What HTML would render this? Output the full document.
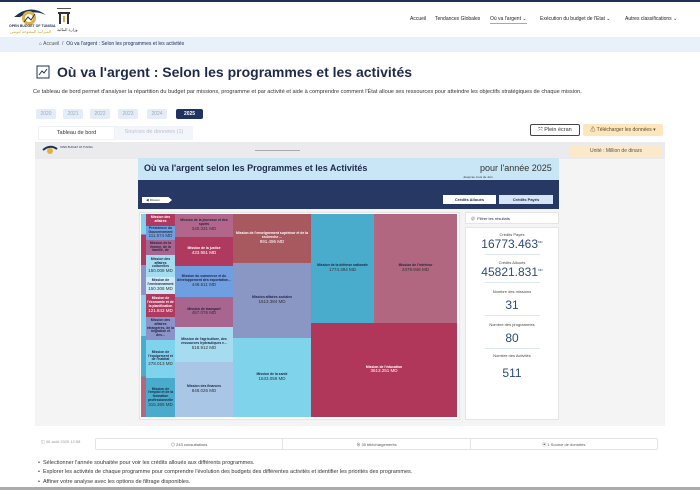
<!DOCTYPE html>
<html><head><meta charset="utf-8"><style>
*{margin:0;padding:0;box-sizing:border-box}
body{width:700px;height:490px;overflow:hidden;background:#fff;font-family:"Liberation Sans","Noto Sans CJK SC",sans-serif;color:#1e2a4a;position:relative}
.a{position:absolute}
.t{position:absolute;display:flex;flex-direction:column;align-items:center;justify-content:center;text-align:center;font-size:3.4px;font-weight:bold;color:#1d2340;line-height:1.1;overflow:hidden;padding:1px}
.t span{font-weight:normal;font-size:4.5px;color:#333;line-height:1.1}
.nav{font-size:5px;color:#222}
.yr{position:absolute;top:109px;height:10px;width:20px;background:#e4ecf7;color:#9aabc4;font-size:5px;text-align:center;line-height:10px;border-radius:2px}
.k{font-size:4px;color:#444;text-align:center}
.v{font-size:12px;color:#2d4a7a;text-align:center}
</style></head><body>
<div class="a" style="left:0;top:0;width:700px;height:2px;background:#1f2f55"></div>
<svg class="a" style="left:10px;top:3px" width="40" height="32" viewBox="0 0 40 32"><path d="M4 14 Q20 0 36 12 Q22 6 10 14Z" fill="#1f2f55"/><circle cx="19" cy="15" r="7" fill="#e2b13c"/><circle cx="19" cy="15" r="4" fill="#fff"/><path d="M14 19 L18 14 L21 17 L25 11" stroke="#1f2f55" stroke-width="1" fill="none"/></svg>
<div class="a" style="left:9px;top:24px;font-size:3.5px;font-weight:bold;color:#1f2f55">OPEN BUDGET OF TUNISIA</div>
<div class="a" style="left:10px;top:29px;font-size:4px;color:#d4a93a">الميزانية المفتوحة لتونس</div>
<svg class="a" style="left:55px;top:5px" width="18" height="28" viewBox="0 0 18 28"><rect x="3" y="7" width="12" height="2" fill="#333"/><rect x="4" y="9" width="2" height="10" fill="#333"/><rect x="12" y="9" width="2" height="10" fill="#333"/><rect x="8" y="11" width="2" height="6" fill="#d4a93a"/><rect x="2" y="3" width="14" height="1" fill="#555"/></svg>
<div class="a" style="left:57px;top:27px;font-size:4px;color:#333">وزارة المالية</div>
<div class="a nav" style="left:410px;top:16px">Accueil</div>
<div class="a nav" style="left:435px;top:16px">Tendances Globales</div>
<div class="a nav" style="left:490px;top:16px;border-bottom:1px solid #d4a93a;padding-bottom:1px">Où va l'argent ⌄</div>
<div class="a nav" style="left:540px;top:16px">Exécution du budget de l'Etat ⌄</div>
<div class="a nav" style="left:625px;top:16px">Autres classifications ⌄</div>
<div class="a" style="left:0;top:37px;width:700px;height:15px;background:#e8f0fa"></div>
<div class="a" style="left:39px;top:41px;font-size:5px;color:#555">⌂ Accueil &nbsp;/&nbsp; <span style="color:#1e2a4a">Où va l'argent : Selon les programmes et les activités</span></div>
<svg class="a" style="left:36px;top:65px" width="14" height="14" viewBox="0 0 14 14"><rect x="1" y="1" width="12" height="12" fill="none" stroke="#1f2f55" stroke-width="1"/><path d="M3 10 L6 6 L8 8 L11 4" stroke="#1f2f55" fill="none" stroke-width="1"/></svg>
<div class="a" style="left:57px;top:64px;font-size:14px;font-weight:bold;color:#1e2a4a">Où va l'argent : Selon les programmes et les activités</div>
<div class="a" style="left:33px;top:89px;font-size:5.6px;color:#333;white-space:nowrap">Ce tableau de bord permet d'analyser la répartition du budget par missions, programme et par activité et aide à comprendre comment l'État alloue ses ressources pour atteindre les objectifs stratégiques de chaque mission.</div>
<div class="yr" style="left:36px">2020</div><div class="yr" style="left:63px">2021</div><div class="yr" style="left:90px">2022</div><div class="yr" style="left:118px">2023</div><div class="yr" style="left:147px">2024</div>
<div class="yr" style="left:176px;width:27px;background:#1f3360;color:#fff;font-weight:bold">2025</div>
<div class="a" style="left:38px;top:126px;width:77px;height:14px;background:#fff;border:1px solid #eef1f5;font-size:5.5px;text-align:center;line-height:13px;color:#333">Tableau de bord</div>
<div class="a" style="left:115px;top:126px;width:78px;height:14px;background:#f2f5fa;font-size:5.5px;text-align:center;line-height:13px;color:#b8c2d2">Sources de données (1)</div>
<div class="a" style="left:530px;top:124px;width:50px;height:12px;border:1px solid #444;border-radius:2px;font-size:5.5px;text-align:center;line-height:10px;color:#333">⤧ Plein écran</div>
<div class="a" style="left:583px;top:124px;width:80px;height:12px;background:#fde6bd;border-radius:2px;font-size:5px;text-align:center;line-height:12px;color:#5a4a20">⚠ Télécharger les données ▾</div>
<div class="a" style="left:35px;top:142px;width:630px;height:284px;background:#f4f4f5"></div>
<div class="a" style="left:35px;top:142px;width:630px;height:17px;background:#ebebed"></div>
<svg class="a" style="left:42px;top:144px" width="16" height="12" viewBox="0 0 16 12"><path d="M1 6 Q8 0 15 5" stroke="#1f2f55" stroke-width="2" fill="none"/><circle cx="8" cy="7" r="3" fill="#e2b13c"/></svg>
<div class="a" style="left:60px;top:146px;font-size:2.5px;color:#1f2f55">OPEN BUDGET OF TUNISIA</div>
<div class="a" style="left:255px;top:150px;width:45px;height:1px;background:#aaa"></div>
<div class="a" style="left:570px;top:145px;width:92px;height:13px;background:#fce9cb;font-size:5px;text-align:center;line-height:13px;color:#555">Unité : Million de dinars</div>
<div class="a" style="left:138px;top:158px;width:421px;height:22px;background:#c8e6f6"></div>
<div class="a" style="left:144px;top:163px;font-size:9px;font-weight:bold;color:#1e2a4a">Où va l'argent selon les Programmes et les Activités</div>
<div class="a" style="left:480px;top:163px;font-size:9px;color:#333">pour l'année 2025</div>
<div class="a" style="left:463px;top:175px;font-size:3px;color:#333">Jusqu'au mois de Juin</div>
<div class="a" style="left:138px;top:180px;width:421px;height:29px;background:#263863"></div>
<div class="a" style="left:142px;top:197px;width:30px;height:6px;background:#fff;font-size:3px;line-height:6px;padding-left:4px;clip-path:polygon(0 0,88% 0,100% 50%,88% 100%,0 100%)">◀ Mission</div>
<div class="a" style="left:443px;top:195px;width:53px;height:9px;background:#fff;font-size:4px;font-weight:bold;text-align:center;line-height:9px">Crédits Alloués</div>
<div class="a" style="left:499px;top:195px;width:54px;height:9px;background:#d5e4f6;font-size:4px;font-weight:bold;text-align:center;line-height:9px">Crédits Payés</div>
<div class="a" style="left:139px;top:212px;width:321px;height:208px;background:#fff;border:1px solid #e5e5e5"></div>
<div class="a" style="left:141px;top:214px;width:5px;height:203px;background:linear-gradient(#7fd3ec 0 10%,#b0395f 10% 25%,#8b93c8 25% 40%,#7fd3ec 40% 60%,#4aaccd 60% 80%,#b0677f 80%)"></div>
<div class="t" style="left:146px;top:214px;width:29px;height:12px;background:#b0395f;color:#fff">Mission des affaires</div>
<div class="t" style="left:146px;top:226px;width:29px;height:14px;background:#6f9fe0">Présidence du Gouvernement<span>111.574 MD</span></div>
<div class="t" style="left:146px;top:240px;width:29px;height:15px;background:#a8658f">Mission de la femme, de la famille, de</div>
<div class="t" style="left:146px;top:255px;width:29px;height:22px;background:#a6dcf0">Mission des affaires culturelles<span>150.008 MD</span></div>
<div class="t" style="left:146px;top:277px;width:29px;height:17px;background:#cdebf6">Mission de l'environnement<span>150.308 MD</span></div>
<div class="t" style="left:146px;top:294px;width:29px;height:23px;background:#b0395f;color:#fff">Mission de l'économie et de la planification<span style="color:#fff">121.843 MD</span></div>
<div class="t" style="left:146px;top:317px;width:29px;height:23px;background:#8b93c8">Mission des affaires étrangères, de la migration et des...</div>
<div class="t" style="left:146px;top:340px;width:29px;height:38px;background:#7fd3ec">Mission de l'équipement et de l'habitat<span>278.013 MD</span></div>
<div class="t" style="left:146px;top:378px;width:29px;height:39px;background:#4aaccd">Mission de l'emploi et de la formation professionnelle<span>315.365 MD</span></div>
<div class="t" style="left:175px;top:214px;width:58px;height:23px;background:#b2678a">Mission de la jeunesse et des sports<span>340.331 MD</span></div>
<div class="t" style="left:175px;top:237px;width:58px;height:29px;background:#b0395f;color:#fff">Mission de la justice<span style="color:#fff">433.951 MD</span></div>
<div class="t" style="left:175px;top:266px;width:58px;height:31px;background:#6f9fe0">Mission du commerce et du développement des exportation...<span>448.611 MD</span></div>
<div class="t" style="left:175px;top:297px;width:58px;height:30px;background:#a8658f">Mission de transport<span>457.076 MD</span></div>
<div class="t" style="left:175px;top:327px;width:58px;height:35px;background:#a6dcf0">Mission de l'agriculture, des ressources hydrauliques e...<span>518.912 MD</span></div>
<div class="t" style="left:175px;top:362px;width:58px;height:55px;background:#a9c6e6">Mission des finances<span>848.026 MD</span></div>
<div class="t" style="left:233px;top:214px;width:78px;height:49px;background:#a8585f;color:#fff">Mission de l'enseignement supérieur et de la recherche ...<span style="color:#fff">991.496 MD</span></div>
<div class="t" style="left:233px;top:263px;width:78px;height:75px;background:#8a96c4">Mission affaires sociales<span>1513.384 MD</span></div>
<div class="t" style="left:233px;top:338px;width:78px;height:79px;background:#7fd4ec">Mission de la santé<span>1633.059 MD</span></div>
<div class="t" style="left:311px;top:214px;width:63px;height:109px;background:#4aaccd">Mission de la défense nationale<span>1774.394 MD</span></div>
<div class="t" style="left:374px;top:214px;width:83px;height:109px;background:#b0677f">Mission de l'intérieur<span>2379.946 MD</span></div>
<div class="t" style="left:311px;top:323px;width:146px;height:94px;background:#b0365a;color:#fff">Mission de l'éducation<span style="color:#fff">3613.251 MD</span></div>
<div class="a" style="left:465px;top:212px;width:94px;height:12px;background:#fff;border:1px solid #e5e5e5;font-size:4px;line-height:11px;padding-left:5px">⊘ &nbsp;Filtrer les résultats</div>
<div class="a" style="left:465px;top:227px;width:94px;height:193px;background:#fff;border:1px solid #e5e5e5">
<div class="k" style="margin-top:4px">Crédits Payés</div><div class="v">16773.463<sup style="font-size:3px">MD</sup></div>
<div style="width:55px;height:1px;background:#dde8ee;margin:3px auto"></div>
<div class="k" style="margin-top:5px">Crédits Alloués</div><div class="v">45821.831<sup style="font-size:3px">MD</sup></div>
<div style="width:55px;height:1px;background:#dde8ee;margin:3px auto"></div>
<div class="k" style="margin-top:6px">Nombre des missions</div><div class="v" style="margin-top:4px">31</div>
<div style="width:55px;height:1px;background:#dde8ee;margin:3px auto"></div>
<div class="k" style="margin-top:6px">Nombre des programmes</div><div class="v" style="margin-top:4px">80</div>
<div style="width:55px;height:1px;background:#dde8ee;margin:3px auto"></div>
<div class="k" style="margin-top:4px">Nombre des Activités</div><div class="v" style="margin-top:8px">511</div>
</div>
<div class="a" style="left:41px;top:439px;font-size:4px;color:#999">◫ 06 août 2025 12:58</div>
<div class="a" style="left:95px;top:438px;width:563px;height:12px;border:1px solid #e3e3e3;border-radius:2px;display:flex;font-size:4px;color:#555">
<div style="flex:1;text-align:center;line-height:11px;border-right:1px solid #e3e3e3">◎ 243 consultations</div>
<div style="flex:1;text-align:center;line-height:11px;border-right:1px solid #e3e3e3">⊕ 30 téléchargements</div>
<div style="flex:1;text-align:center;line-height:11px">▣ 1 Source de données</div></div>
<div class="a" style="left:38px;top:459px;font-size:5.5px;color:#333;line-height:9.3px">
• &nbsp;Sélectionner l'année souhaitée pour voir les crédits alloués aux différents programmes.<br>
• &nbsp;Explorer les activités de chaque programme pour comprendre l'évolution des budgets des différentes activités et identifier les priorités des programmes.<br>
• &nbsp;Affiner votre analyse avec les options de filtrage disponibles.</div>
<div class="a" style="left:0;top:487px;width:700px;height:3px;background:#a9abb0"></div>
</body></html>
